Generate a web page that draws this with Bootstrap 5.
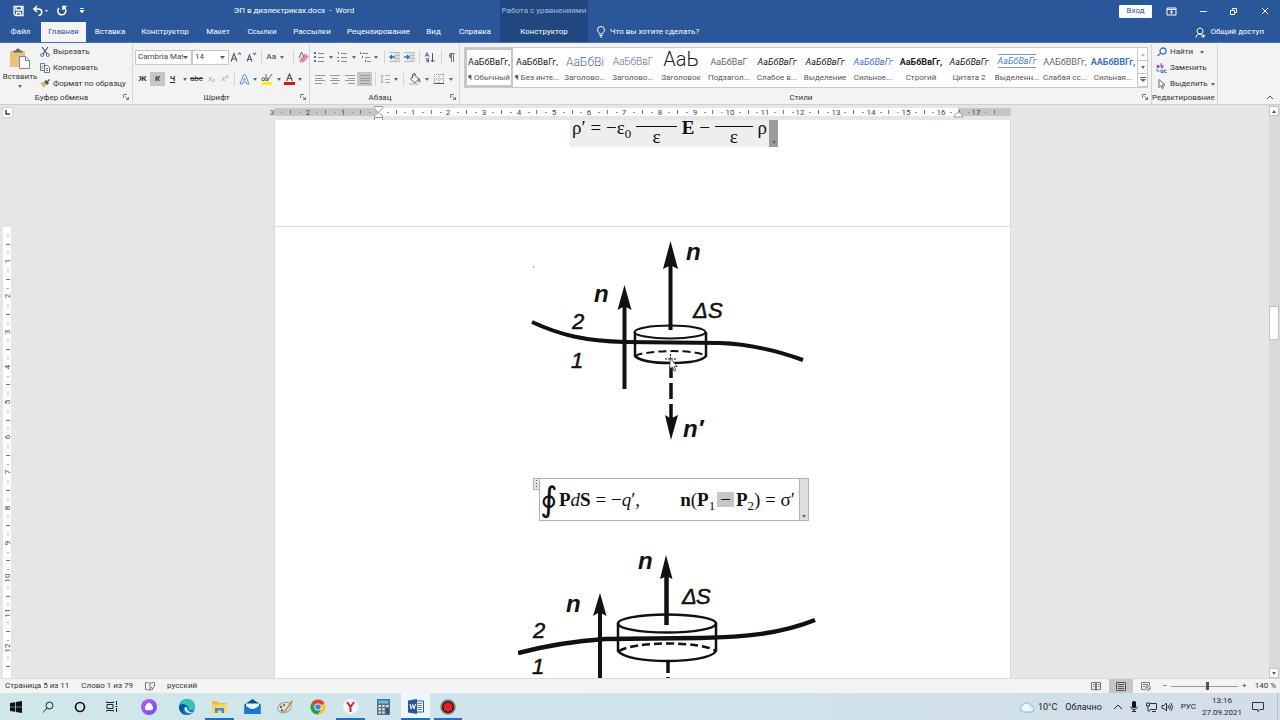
<!DOCTYPE html>
<html lang="ru">
<head>
<meta charset="utf-8">
<meta name="viewport" content="width=device-width, initial-scale=1">
<title>ЭП в диэлектриках.docx - Word</title>
<link href="https://cdn.jsdelivr.net/npm/bootstrap@5.3.0/dist/css/bootstrap.min.css" rel="stylesheet">
<style>
:root{--blue:#2a579a;--ink:#333}
body{font-family:Roboto,"Noto Sans",sans-serif;font-size:8px;line-height:12px;color:var(--ink);background:#e6e6e6}
svg{display:block;flex:none}
a{text-decoration:none;color:inherit}
.b0{border:0;background:none;padding:0;color:inherit;line-height:12px;font-size:inherit;display:flex;align-items:center;justify-content:center;white-space:nowrap}
.head,.ribbon,.status,.bar,.rul{flex-shrink:0}
/* header */
.head{background:var(--blue);color:#fff;border-bottom:1px solid #4a70aa}
.row-title{height:22px}
.row-tabs{height:20px}
.qat{width:88px;padding-left:12px;gap:8px}
.doc-title{width:412px}
.ctx{width:88px;background:#20477f;color:#a9bfdf;white-space:nowrap}
.tabs{display:grid;grid-template-columns:41px 45px 48px 62px 44px 44px 56px 77px 33px 50px 88px}
.tabs a{display:flex;align-items:center;justify-content:center;color:#fff}
.tabs a.on{background:#f3f3f3;color:var(--blue)}
.tabs a.ctx{background:#20477f}
.login{width:33px;height:13px;background:#fff;color:var(--blue);border-radius:1px}
.win{width:31px;height:22px}
/* ribbon */
.ribbon{height:62px;background:#f3f3f3;border-bottom:1px solid #d0d0d0}
.grp{border-right:1px solid #d4d4d4;margin-top:1px}
.grp .cap{height:12px;padding-right:3px}
.g-clip{width:133px}.g-font{width:177px}.g-par{width:150px}.g-sty{width:692px}.g-edit{width:66px}
.paste{width:40px;flex-direction:column;gap:2px;justify-content:flex-start;padding-top:4px}
.stack .b0{height:16px;gap:3px;justify-content:flex-start}
.tools{height:18px;padding-left:2px}
.tools-top{height:26px}
.combo{height:15px;border:1px solid #c6c6c6;border-radius:0;background:#fff url("data:image/svg+xml,%3Csvg xmlns='http://www.w3.org/2000/svg' width='5' height='3'%3E%3Cpath d='M0 0h5L2.500 3z' fill='%23555'/%3E%3C/svg%3E") no-repeat right 3px center;appearance:none;padding:0 8px 0 2px;line-height:12px;color:#444;overflow:hidden}
.c-face{width:57px}.c-size{width:37px}
.w9{width:9px}.w12{width:12px}.w15{width:15px}.w20{width:20px}
.tools .b0{height:14px}
.tools .b0.on{background:#c6c6c6}
.vr1{width:1px;height:14px;background:#d4d4d4;margin:0 3px}
.off{color:#a8a8a8}
.car{width:0;height:0;border:2px solid transparent;border-top:3px solid #666;border-bottom:0}
.gallery{margin:3px 3px 0 4px;height:41px;border:1px solid #c9c9c9;background:#fff}
.sty{width:48px;flex-direction:column;height:39px;justify-content:flex-start}
.sty.on{box-shadow:inset 0 0 0 2px #c6c6c6}
.sty b,.sty i,.sty span{height:24px;line-height:28px;font-size:9px;color:#222;font-weight:400}
.sty em{font-style:normal;line-height:12px;color:#555}
.sty .h1x{font-size:12px;color:#4f6d94;font-weight:300}
.sty .h2x{font-size:10px;color:#4f6d94;font-weight:300}
.sty .tx{font-size:20px;line-height:22px;font-weight:300}
.sty .bl{color:#3f73c0}
.sty .gy{color:#666}
.sty .bd{font-weight:700}
.sty .ln{height:14px;line-height:12px;margin:6px 0 4px;border:solid #7a9bc8;border-width:1px 0;color:#4f7fc0}
.gscroll{width:10px}
.gscroll .b0{height:13px;width:10px;border-left:1px solid #c9c9c9;border-bottom:1px solid #c9c9c9}
/* workspace */
.ws{min-height:0}
.rul{height:15px}
.corner{width:16px;padding:2px}
.tab-stop{width:11px;height:11px;background:#fff;border:1px solid #d2d2d2}
.sheet-w{width:737px}
.hr-strip{height:8px;margin-top:3px;background:linear-gradient(90deg,#c6c6c6 104px,#fff 104px,#fff 684px,#c6c6c6 684px)}
.vr-col{width:16px;padding:107px 5px 0 3px}
.vr-strip{width:8px;background:#fff;min-height:0;overflow:hidden}
.scr{width:11px;background:#dadada;padding:1px 1px 0 0}
.scr .b0,.scr .thumb{width:10px;height:10px;background:#fff;border:1px solid #c0c0c0}
.scr .thumb{height:34px}
.sp-a{flex:191 0 0}.sp-b{flex:329 0 0}
.sheet{background:#fff;padding:0 53px 0 104px;border:solid #d9d9d9;border-width:0 1px}
.p-one{height:106px}
.p-two{border-top:1px solid #dcdcdc}
.eq{font-family:"Liberation Serif",serif;font-size:19px;line-height:24px;color:#111;margin-left:12px}
.eq sub{font-size:13px;bottom:-4px}
.eq-a{width:208px;height:27px;background:#eee;overflow:hidden}
.eq-a .in{height:27px;padding:0 2px;margin-top:-2px}
.frac{border-top:1px solid #111;text-align:center;height:20px;line-height:20px;margin-top:8px}
.f-a{width:41px}.f-b{width:38px}
.tail{background:#9a9a9a;width:9px;padding-bottom:3px}
.eq-b{width:270px;height:43px;border:1px solid #b3b3b3;margin-top:28px}
.eq-b .tail{background:#dedede;border-left:1px solid #b3b3b3;padding-bottom:2px}
.oint{font-family:"DejaVu Serif",serif;font-size:34px;line-height:40px;width:19px}
.handle{position:absolute;left:-7px;top:-1px;width:7px;height:12px;background:#e4e4e4;border:1px solid #b3b3b3}
.sel{background:#c6c6c6;padding:0 3px;line-height:15px;height:15px;margin:0 2px}
.d-one{margin-top:8px}.d-two{margin-top:29px}
.fig text{font-family:"Liberation Sans Narrow","Liberation Sans",sans-serif;font-style:italic;font-size:22px;fill:#111;stroke:#111;stroke-width:.5}
.fig .bn{font-family:"Liberation Sans",sans-serif;font-weight:700;font-size:24px;stroke:none}
.rule text{font-size:8px;fill:#444;text-anchor:middle}
/* status */
.status{height:15px;background:#f3f3f3;border-top:1px solid #dadada;padding-left:5px}
.st-left{gap:12px}
.view-on{width:24px;height:14px;background:#c6c6c6}
.zoomer{width:67px;height:10px;appearance:none;background:linear-gradient(#999,#999) center/100% 1px no-repeat}
.zoomer::-webkit-slider-thumb{appearance:none;width:3px;height:8px;background:#555;border:0;border-radius:0}
.bar{height:27px;background:linear-gradient(90deg,#cfe7eb,#cfe4eb 45%,#d3dde9)}
.apps{display:grid;grid-template-columns:repeat(4,32px) 42px 33px 33px 33px 32px 33px 33px 32px 33px 32px}
.apps .b0{height:27px;border-bottom:2px solid transparent;margin:0 2px;padding-top:2px}
.apps .run{border-bottom-color:#1a73c8}
.apps .act{background:#eef7fb}
.tray{color:#222}
.wthr{font-size:9px}
.clock{width:44px;text-align:center}
.desk{border-left:1px solid #b5bfca;width:3px;margin-left:13px}
</style>
</head>
<body class="vh-100 d-flex flex-column overflow-hidden">
<header class="head">
  <div class="row-title d-flex">
    <div class="qat d-flex align-items-center">
      <button class="b0" aria-label="Сохранить"><svg width="12" height="12" viewBox="0 0 12 12" fill="none" stroke="#fff" stroke-width="1.300"><path d="M2 1.500h9v9H3.500L2 9zM4 1.500v3.500h5.500V1.500M4.500 10.500v-3h4v3"/></svg></button>
      <button class="b0" aria-label="Отменить"><svg width="16" height="12" viewBox="0 0 16 12" fill="none" stroke="#fff" stroke-width="1.600"><path d="M5 1L2 4l3 3M2 4h4.500a3 3 0 0 1 0 6.500"/><path d="M13 5h3l-1.500 2z" fill="#fff" stroke="none"/></svg></button>
      <button class="b0" aria-label="Повторить"><svg width="12" height="12" viewBox="0 0 12 12" fill="none" stroke="#fff" stroke-width="1.500"><path d="M3 3a4 4 0 1 0 5-.5M10.500 1.500H7V5"/></svg></button>
      <button class="b0" aria-label="Настройка панели"><svg width="12" height="8" viewBox="0 0 12 8"><path d="M4 1.500h4M4 3.500h4L6 6z" fill="#fff" stroke="#fff" stroke-width=".8"/></svg></button>
    </div>
    <div class="doc-title text-center align-self-center">ЭП в диэлектриках.docx&nbsp; -&nbsp; Word</div>
    <div class="ctx d-flex align-items-center justify-content-center">Работа с уравнениями</div>
    <div class="ms-auto d-flex align-items-center">
      <button class="b0 login me-1">Вход</button>
      <button class="b0 win" aria-label="Параметры ленты"><svg width="11" height="9" viewBox="0 0 11 9" fill="none" stroke="#fff"><path d="M1 1h9v7H1zM1 2.500h9M5.500 7V4M4 5.300L5.500 4 7 5.300"/></svg></button>
      <button class="b0 win" aria-label="Свернуть"><svg width="8" height="8" stroke="#fff"><path d="M1 4.500h7"/></svg></button>
      <button class="b0 win" aria-label="Восстановить"><svg width="9" height="9" fill="none" stroke="#fff"><path d="M1.500 3.500h4v4h-4zM3.500 3V1.500h4v4H6"/></svg></button>
      <button class="b0 win" aria-label="Закрыть"><svg width="8" height="8" stroke="#fff"><path d="M1 1l6 6M7 1L1 7"/></svg></button>
    </div>
  </div>
  <div class="row-tabs d-flex">
    <nav class="tabs" aria-label="Вкладки ленты">
      <a href="#">Файл</a><a href="#" class="on">Главная</a><a href="#">Вставка</a><a href="#">Конструктор</a><a href="#">Макет</a><a href="#">Ссылки</a><a href="#">Рассылки</a><a href="#">Рецензирование</a><a href="#">Вид</a><a href="#">Справка</a><a href="#" class="ctx">Конструктор</a>
    </nav>
    <button class="b0 ps-2 gap-1"><svg width="10" height="12" viewBox="0 0 10 12" fill="none" stroke="#fff"><path d="M3.500 8C3.500 6.500 1.500 6 1.500 4a3.500 3.500 0 0 1 7 0c0 2-2 2.500-2 4zM3.500 9.500h3M4 11h2"/></svg>Что вы хотите сделать?</button>
    <button class="b0 ms-auto me-3 gap-1"><svg width="11" height="11" viewBox="0 0 11 11" fill="none" stroke="#fff"><circle cx="5" cy="4" r="3"/><path d="M1 10.500C1 8 3 7 5 7c1 0 1.500.2 2 .5M6 9h4.500M8.200 7v4"/></svg>Общий доступ</button>
  </div>
</header>

<section class="ribbon d-flex" aria-label="Главная">
  <div class="grp g-clip d-flex flex-column">
    <div class="d-flex">
      <button class="b0 paste"><svg width="20" height="21" viewBox="0 0 20 21"><path d="M0 3h15v16H0z" fill="#e9c27a"/><path d="M3.500 4.500V2.500h2.500a2 2 0 0 1 4 0h2.500v2z" fill="#666"/><path d="M9.500 8.500h6l4 4v8h-10z" fill="#fff" stroke="#888"/><path d="M15.500 8.500v4h4" fill="none" stroke="#888"/></svg>Вставить<span class="car"></span></button>
      <div class="stack">
        <button class="b0"><svg width="10" height="10" viewBox="0 0 10 10" fill="none"><path d="M2 0l5 7M8 0L3 7" stroke="#555" stroke-width="1.200"/><circle cx="2.200" cy="8" r="1.500" stroke="#3b78b5"/><circle cx="7.800" cy="8" r="1.500" stroke="#3b78b5"/></svg>Вырезать</button>
        <button class="b0"><svg width="10" height="10" viewBox="0 0 10 10" fill="#fff" stroke="#6a7a8a"><path d="M.5.500h4v7h-4zM4.500 2.500h3l2 2v5h-5z"/><path d="M6 5.500h2M6 7.500h2M1.500 3h2M1.500 5h2" stroke="#3b78b5"/></svg>Копировать</button>
        <button class="b0"><svg width="10" height="10" viewBox="0 0 10 10"><path d="M0 4l4-1 2 3-2 3z" fill="#e5b36a"/><path d="M4 3l2-2 3 3-2 2zM7 2l2-2 1 1-2 2z" fill="#555"/></svg>Формат по образцу</button>
      </div>
    </div>
    <div class="cap d-flex mt-auto"><span class="flex-fill text-center">Буфер обмена</span><svg width="6" height="8" viewBox="0 0 6 8" fill="none" stroke="#777"><path d="M.5 6V2.500H4M2.500 4.500l3 3M5.500 5v2.500H3"/></svg></div>
  </div>

  <div class="grp g-font d-flex flex-column">
    <div class="tools tools-top d-flex align-items-center">
      <select class="combo c-face" aria-label="Шрифт"><option>Cambria Math</option></select>
      <select class="combo c-size" aria-label="Размер шрифта"><option>14</option></select>
      <button class="b0 w15" aria-label="Увеличить"><svg width="12" height="12" viewBox="0 0 12 12" fill="none" stroke="#555" stroke-width="1.100"><path d="M1 10.500l3-8 3 8M2 8h4"/><path d="M8 3.500L9.500 2 11 3.500" stroke="#3b78b5"/></svg></button>
      <button class="b0 w15" aria-label="Уменьшить"><svg width="12" height="12" viewBox="0 0 12 12" fill="none" stroke="#555" stroke-width="1.100"><path d="M2 10.500l2.500-6.500L7 10.500M3 8.500h3"/><path d="M8 2l1.500 1.500L11 2" stroke="#3b78b5"/></svg></button>
      <span class="vr1"></span>
      <button class="b0 gap-1 w20">Aa<span class="car"></span></button>
      <span class="vr1 ms-2"></span>
      <button class="b0 w12" aria-label="Очистить формат"><svg width="11" height="12" viewBox="0 0 11 12"><path d="M1 9.500l6-7 4 3-5.500 6H3z" fill="#e58aa0"/><path d="M1 7l2.500-6L6 6" fill="none" stroke="#666"/></svg></button>
    </div>
    <div class="tools d-flex align-items-center">
      <button class="b0 w15 fw-bold">Ж</button><button class="b0 w15 on fw-bold fst-italic">К</button><button class="b0 w15 fw-bold text-decoration-underline">Ч</button><button class="b0 w9" aria-label="Вид подчёркивания"><span class="car"></span></button><button class="b0 w15 text-decoration-line-through">abc</button><button class="b0 w15 off">x₂</button><button class="b0 w12 off">x²</button>
      <span class="vr1"></span>
      <button class="b0 w12" aria-label="Эффекты"><svg width="11" height="11" viewBox="0 0 11 11" fill="#fff" stroke="#5b93cc"><path d="M1 10L4.500 1h2L10 10H7.800L7 8H4l-.8 2zM4.700 6.200h1.600L5.500 4z"/></svg></button><button class="b0 w9" aria-label="Ещё эффекты"><span class="car"></span></button>
      <button class="b0 w15" aria-label="Цвет выделения"><svg width="12" height="12" viewBox="0 0 12 12"><path d="M1 9h10v3H1z" fill="#ffee00"/><path d="M1 7.500V5h2.500v2.500zM5 1v6.500h2V5H5M6 8l5-7" fill="none" stroke="#666"/></svg></button><button class="b0 w9" aria-label="Ещё выделение"><span class="car"></span></button>
      <button class="b0 w12" aria-label="Цвет текста"><svg width="11" height="12" viewBox="0 0 11 12"><path d="M0 9h11v3H0z" fill="#e01010"/><path d="M2.500 8l3-7 3 7M3.500 5.500h4" fill="none" stroke="#555" stroke-width="1.200"/></svg></button><button class="b0 w9" aria-label="Ещё цвет"><span class="car"></span></button>
    </div>
    <div class="cap d-flex mt-auto"><span class="flex-fill text-center">Шрифт</span><svg width="6" height="8" viewBox="0 0 6 8" fill="none" stroke="#777"><path d="M.5 6V2.500H4M2.500 4.500l3 3M5.500 5v2.500H3"/></svg></div>
  </div>

  <div class="grp g-par d-flex flex-column">
    <div class="tools tools-top d-flex align-items-center">
      <button class="b0 w15" aria-label="Маркеры"><svg width="10" height="10" fill="none"><path d="M0 1h2M0 5h2M0 9h2" stroke="#3b78b5" stroke-width="2"/><path d="M4 1.500h6M4 5.500h6M4 9.500h6" stroke="#888"/></svg></button><button class="b0 w9" aria-label="Ещё маркеры"><span class="car"></span></button>
      <button class="b0 w15" aria-label="Нумерация"><svg width="10" height="10" fill="none"><path d="M1.500 0v2M0 5.500h2M1.500 8v2" stroke="#3b78b5"/><path d="M4 1.500h6M4 5.500h6M4 9.500h6" stroke="#888"/></svg></button><button class="b0 w9" aria-label="Ещё нумерация"><span class="car"></span></button>
      <button class="b0 w15" aria-label="Многоуровневый список"><svg width="12" height="10" fill="none"><path d="M1.500 0v2M3.500 4v2M6.500 8v2" stroke="#3b78b5"/><path d="M3 1.500h6M6 5.500h5M8 9.500h4" stroke="#888"/></svg></button><button class="b0 w9" aria-label="Ещё списки"><span class="car"></span></button>
      <span class="vr1"></span>
      <button class="b0 w15" aria-label="Уменьшить отступ"><svg width="11" height="10" fill="none"><path d="M5 0h6v10H5z" fill="#dcdcdc"/><path d="M0 .5h11M6 3.500h5M6 6.500h5M0 9.500h11" stroke="#bbb"/><path d="M6 5H1M3 3L1 5l2 2" stroke="#2f6fb5" stroke-width="1.500"/></svg></button>
      <button class="b0 w15" aria-label="Увеличить отступ"><svg width="11" height="10" fill="none"><path d="M5 0h6v10H5z" fill="#dcdcdc"/><path d="M0 .5h11M6 3.500h5M6 6.500h5M0 9.500h11" stroke="#bbb"/><path d="M0 5h5M3 3l2 2-2 2" stroke="#2f6fb5" stroke-width="1.500"/></svg></button>
      <span class="vr1"></span>
      <button class="b0 w15" aria-label="Сортировка"><svg width="10" height="11" fill="none"><path d="M0 5l2-4.500L4 5M1 3.500h2" stroke="#3b78b5"/><path d="M3.500 10.500v-4h-2v2h2l-2 2" stroke="#8a4fa0"/><path d="M7.500 1v9M5.500 8l2 2 2-2" stroke="#555"/></svg></button>
      <span class="vr1"></span>
      <button class="b0 w15" aria-label="Знаки абзаца"><svg width="7" height="9" fill="none" stroke="#777"><path d="M3.500 9V.5M5.500 9V.5M2 .5h5"/><path d="M3.500 0v5a2.500 2.500 0 0 1 0-5z" fill="#777" stroke="none"/></svg></button>
    </div>
    <div class="tools d-flex align-items-center">
      <button class="b0 w15" aria-label="По левому краю"><svg width="10" height="9" stroke="#999"><path d="M0 .5h10M0 3.500h7M0 5.500h10M0 8.500h7"/></svg></button><button class="b0 w15" aria-label="По центру"><svg width="10" height="9" stroke="#999"><path d="M0 .5h10M2 3.500h6M0 5.500h10M2 8.500h6"/></svg></button><button class="b0 w15" aria-label="По правому краю"><svg width="10" height="9" stroke="#999"><path d="M0 .5h10M3 3.500h7M0 5.500h10M3 8.500h7"/></svg></button><button class="b0 w15 on" aria-label="По ширине"><svg width="10" height="9" stroke="#999"><path d="M0 .5h10M0 3.500h10M0 5.500h10M0 8.500h10"/></svg></button>
      <span class="vr1"></span>
      <button class="b0 w12" aria-label="Интервал"><svg width="10" height="10" fill="none" stroke="#aaa"><path d="M2 1v8M.5 2.500L2 1l1.500 1.500M.5 7.500L2 9l1.500-1.500M5 1.500h5M5 5.500h5M5 8.500h5"/></svg></button><button class="b0 w9" aria-label="Ещё интервал"><span class="car"></span></button>
      <span class="vr1"></span>
      <button class="b0 w15" aria-label="Заливка"><svg width="12" height="12" viewBox="0 0 12 12" fill="none"><path d="M5 1.500l5 4.500-4 4-4.500-4zM3.500 5V2a1.500 1.500 0 0 1 3 0" stroke="#666"/><path d="M10 5c2 2 1.500 4 .5 4.500S9 7 10 5z" fill="#3b78b5"/><path d="M0 11h9" stroke="#ccc" stroke-width="2"/></svg></button><button class="b0 w9" aria-label="Ещё заливка"><span class="car"></span></button>
      <button class="b0 w15" aria-label="Границы"><svg width="10" height="10" fill="none"><path d="M.5 0v9M9.500 0v9M5 0v9M0 .5h10M0 5h10" stroke="#999" stroke-dasharray="1 1"/><path d="M0 9.500h10" stroke="#555"/></svg></button><button class="b0 w9" aria-label="Ещё границы"><span class="car"></span></button>
    </div>
    <div class="cap d-flex mt-auto"><span class="flex-fill text-center">Абзац</span><svg width="6" height="8" viewBox="0 0 6 8" fill="none" stroke="#777"><path d="M.5 6V2.500H4M2.500 4.500l3 3M5.500 5v2.500H3"/></svg></div>
  </div>

  <div class="grp g-sty d-flex flex-column">
    <div class="gallery d-flex">
      <button class="b0 sty on"><span>АаБбВвГг,</span><em>¶ Обычный</em></button>
      <button class="b0 sty"><span>АаБбВвГг,</span><em>¶ Без инте...</em></button>
      <button class="b0 sty"><span class="h1x">АаБбВі</span><em>Заголово...</em></button>
      <button class="b0 sty"><span class="h2x">АаБбВвГ</span><em>Заголово...</em></button>
      <button class="b0 sty"><span class="tx">АаЬ</span><em>Заголовок</em></button>
      <button class="b0 sty"><span class="gy">АаБбВвГ</span><em>Подзагол...</em></button>
      <button class="b0 sty"><i>АаБбВвГг</i><em>Слабое в...</em></button>
      <button class="b0 sty"><i>АаБбВвГг</i><em>Выделение</em></button>
      <button class="b0 sty"><i class="bl">АаБбВвГг</i><em>Сильное...</em></button>
      <button class="b0 sty"><b class="bd">АаБбВвГг,</b><em>Строгий</em></button>
      <button class="b0 sty"><i>АаБбВвГг</i><em>Цитата 2</em></button>
      <button class="b0 sty"><i class="ln">АаБбВвГг</i><em>Выделенн...</em></button>
      <button class="b0 sty"><span class="gy">ААБбВВГг,</span><em>Слабая сс...</em></button>
      <button class="b0 sty"><b class="bl bd">ААБбВВГг,</b><em>Сильная...</em></button>
      <div class="gscroll ms-auto">
        <button class="b0" aria-label="Вверх"><svg width="4" height="3"><path d="M0 3h4L2 0z" fill="#bbb"/></svg></button>
        <button class="b0" aria-label="Вниз"><span class="car"></span></button>
        <button class="b0" aria-label="Все стили"><svg width="6" height="6"><path d="M0 .5h6" stroke="#666"/><path d="M0 2h6L3 5z" fill="#666"/></svg></button>
      </div>
    </div>
    <div class="cap d-flex mt-auto"><span class="flex-fill text-center">Стили</span><svg width="6" height="8" viewBox="0 0 6 8" fill="none" stroke="#777"><path d="M.5 6V2.500H4M2.500 4.500l3 3M5.500 5v2.500H3"/></svg></div>
  </div>

  <div class="grp g-edit d-flex flex-column">
    <div class="stack ps-1">
      <button class="b0"><svg width="11" height="10" fill="none" stroke="#3b78b5" stroke-width="1.300"><circle cx="7" cy="4" r="3"/><path d="M5 6L1.500 9"/></svg>Найти <span class="car ms-1"></span></button>
      <button class="b0"><svg width="11" height="10" viewBox="0 0 11 10" fill="none"><path d="M1 2.500h2v2H1v-1h2M5 0v4.500h2v-2H5" stroke="#8a4fa0"/><path d="M5 7h2v2.500H5zM10.500 7h-2v2.500h2M1 6v2h2.500" stroke="#3b78b5"/></svg>Заменить</button>
      <button class="b0"><svg width="11" height="10" fill="#fff" stroke="#666"><path d="M3 .5v8l2-2 1.200 3 1.300-.6L6.300 6H9z"/></svg>Выделить<span class="car"></span></button>
    </div>
    <div class="cap text-center mt-auto">Редактирование</div>
  </div>
  <button class="b0 ms-auto me-1 mb-1 align-self-end" aria-label="Свернуть ленту"><svg width="12" height="6" fill="none" stroke="#555"><path d="M3 5l3-3 3 3"/></svg></button>
</section>

<main class="ws flex-fill d-flex">
  <div class="ws flex-fill d-flex flex-column">
    <div class="rul d-flex">
      <div class="corner"><div class="tab-stop"><svg width="9" height="9" fill="none" stroke="#444" stroke-width="1.500"><path d="M3 2v4h4"/></svg></div></div>
      <div class="flex-fill d-flex justify-content-center">
        <div class="sheet-w hr-strip"><svg class="rule overflow-visible" id="hrule" width="737" height="12"></svg></div>
      </div>
    </div>
    <div class="ws flex-fill d-flex overflow-hidden">
      <div class="vr-col d-flex flex-column"><div class="vr-strip flex-fill"><svg class="rule" id="vrule" width="8" height="100%"></svg></div></div>
      <div class="flex-fill d-flex justify-content-center">
        <article class="sheet-w">
          <div class="sheet p-one d-flex justify-content-center align-items-start">
            <div class="eq eq-a d-flex">
              <div class="in flex-fill d-flex align-items-start justify-content-between lh-1">
                <span>ρ′</span><span>=</span><span>−ε<sub>0</sub></span><span class="frac f-a">ε</span><b>E</b><span>−</span><span class="frac f-b">ε</span><span>ρ</span>
              </div>
              <div class="tail d-flex align-items-end justify-content-center"><span class="car"></span></div>
            </div>
          </div>
          <div class="sheet p-two d-flex flex-column align-items-center">
            <svg class="fig d-one" width="300" height="215" viewBox="518 235 300 215" fill="none" stroke="#111" role="img" aria-label="Граница двух диэлектриков, цилиндр и нормали">
              <path d="M532 322C560 335 585 341 625 342L720 343C750 344 775 350 803 360" stroke-width="4"/>
              <path d="M624.500 389V300" stroke-width="4"/><path d="M624.500 285L631.500 310L626 307H623L617.500 310Z" fill="#111" stroke="none"/>
              <path d="M670.500 330V262" stroke-width="4"/><path d="M670.500 241L678 269L672 266H669L663 269Z" fill="#111" stroke="none"/>
              <ellipse cx="670" cy="332" rx="35.500" ry="6.500" stroke-width="2"/>
              <path d="M635 332V356C640 361 655 363 671 363S702 361 706 356V332" stroke-width="2.500"/>
              <path d="M635 356C645 350 697 349 706 356" stroke-width="2" stroke-dasharray="8 4"/>
              <path d="M671 366V378M671 383V399M671 404V420" stroke-width="3.500"/><path d="M671 440L665 415L670 418H672L678 415Z" fill="#111" stroke="none"/>
              <circle cx="533.500" cy="267" r=".8" fill="#888" stroke="none"/>
              <text class="bn" x="686" y="260">n</text><text class="bn" x="594" y="302">n</text>
              <text x="693" y="318">Δ</text><text x="708" y="318">S</text>
              <text x="572" y="329">2</text><text x="571" y="368">1</text><text class="bn" x="683" y="437">n′</text>
              <path d="M665 359H676M670.500 354V359" stroke-width="1" stroke-dasharray="2 1"/>
              <path d="M670 358v11l2.500-2 1.500 4 1.800-.8-1.600-3.700h3.200z" fill="#fff" stroke="#333" stroke-width=".8"/>
            </svg>
            <div class="eq eq-b d-flex position-relative">
              <span class="handle d-flex align-items-center justify-content-center"><svg width="3" height="8"><path d="M1.500 0v8" stroke="#555" stroke-dasharray="1 2"/></svg></span>
              <span class="oint">∮</span>
              <div class="flex-fill d-flex align-items-center justify-content-between pe-1"><span><b>P</b><i>d</i><b>S</b> = −<i>q</i>′,</span><span class="d-flex align-items-center"><span><b>n</b>(<b>P</b><sub>1</sub></span><span class="sel">−</span><span><b>P</b><sub>2</sub>) = σ′</span></span></div>
              <div class="tail d-flex align-items-end justify-content-center"><span class="car"></span></div>
            </div>
            <svg class="fig d-two" width="300" height="215" viewBox="518 550 300 215" fill="none" stroke="#111" role="img" aria-label="Граница двух диэлектриков, второе положение">
              <path d="M518 653C545 646 575 641 605 639L700 638C745 637 780 634 815 620" stroke-width="4.500"/>
              <path d="M600 700V610" stroke-width="4"/><path d="M600 593L606.500 616L601 613H598L593 616Z" fill="#111" stroke="none"/>
              <path d="M666.500 625V572" stroke-width="4.500"/><path d="M666 555L672.500 579L668 577H665L660 579Z" fill="#111" stroke="none"/>
              <ellipse cx="667" cy="623.500" rx="49" ry="9" stroke-width="2.500"/>
              <path d="M618 623V651C623 658 645 661 667 661S712 658 716 651V623" stroke-width="2.500"/>
              <path d="M619 651C635 641 702 641 716 651" stroke-width="2.500" stroke-dasharray="8 4"/>
              <path d="M668 662V673M668 677V693" stroke-width="3.500"/>
              <text class="bn" x="638" y="569">n</text><text class="bn" x="566" y="612">n</text>
              <text x="682" y="604">Δ</text><text x="696" y="604">S</text><text x="533" y="638">2</text><text x="532" y="674">1</text>
            </svg>
          </div>
        </article>
      </div>
    </div>
  </div>
  <div class="scr d-flex flex-column">
    <button class="b0" aria-label="Прокрутить вверх"><svg width="4" height="3"><path d="M0 3h4L2 0z" fill="#555"/></svg></button>
    <div class="sp-a"></div><div class="thumb"></div><div class="sp-b"></div>
    <button class="b0" aria-label="Прокрутить вниз"><span class="car"></span></button>
  </div>
</main>

<div class="status d-flex align-items-center">
  <div class="st-left d-flex align-items-center">
    <span>Страница 5 из 11</span><span>Слово 1 из 79</span>
    <svg width="10" height="9" fill="none" stroke="#777"><path d="M5 8V1.500C4 .5 2 .5.500.500v7C2 7.500 4 7.500 5 8.500 6 7.500 7 7.500 8 7.500M5 1.500C6 .5 8 .5 9.500.500V4M6 5l1.500 2L10 3"/></svg>
    <span>русский</span>
  </div>
  <div class="ms-auto d-flex align-items-center">
    <button class="b0 me-2" aria-label="Режим чтения"><svg width="10" height="9" fill="none" stroke="#777"><path d="M.5.500h4v7h-4zM5.500.500h4v7h-4zM2 2.500h1.500M2 4.500h1.500M7 2.500h1.500M7 4.500h1.500M5 0v9"/></svg></button>
    <button class="b0 view-on" aria-label="Разметка страницы"><svg width="10" height="9" fill="none" stroke="#555"><path d="M.5.500h9v8h-9zM2 2.500h6M2 4.500h6M2 6.500h6"/></svg></button>
    <button class="b0 mx-2" aria-label="Веб-документ"><svg width="10" height="9" fill="none" stroke="#777"><path d="M4 7.500H.5v-7h8V3M2 2.500h5M2 4.500h2"/><circle cx="7" cy="6" r="2.300"/><path d="M5 4.500l4 3"/></svg></button>
    <button class="b0 ms-1 me-1">−</button><input class="zoomer m-0" type="range" min="0" max="100" value="55" aria-label="Масштаб"><button class="b0 mx-1">+</button>
    <span class="ms-1 me-1">140 %</span>
  </div>
</div>

<footer class="bar d-flex">
  <div class="apps">
    <button class="b0" aria-label="Пуск"><svg width="12" height="12" viewBox="0 0 12 12" fill="#111"><path d="M0 2l5-.8v4.500H0zM5.700 1L12 0v5.700H5.700zM0 6.300h5v4.500L0 10zM5.700 6.300H12V12l-6.300-1z"/></svg></button>
    <button class="b0" aria-label="Поиск"><svg width="12" height="12" fill="none" stroke="#222"><circle cx="7.500" cy="4.500" r="3.500"/><path d="M5 7L1 11.500"/></svg></button>
    <button class="b0" aria-label="Кортана"><svg width="12" height="12"><circle cx="6" cy="6" r="4.500" fill="none" stroke="#111" stroke-width="1.700"/></svg></button>
    <button class="b0" aria-label="Представление задач"><svg width="12" height="11" fill="none" stroke="#222"><path d="M1 3.500h6v4H1zM.500.500v1h7v-1M.500 10.500v-1h7v1M10.500 0v4M10.500 7v4M9.500 5.500h2"/></svg></button>
    <button class="b0" aria-label="Алиса"><svg width="16" height="16"><defs><linearGradient id="al" x1="0" y1="0" x2="1" y2="1"><stop stop-color="#c25cf0"/><stop offset="1" stop-color="#6a4cf0"/></linearGradient></defs><circle cx="8" cy="8" r="8" fill="url(#al)"/><path d="M8 3.500c2 0 4.500 4.500 4 6.200-.5 2-7.500 2-8 0C3.500 8 6 3.500 8 3.500z" fill="#fff"/></svg></button>
    <button class="b0" aria-label="Edge"><svg width="16" height="16" viewBox="0 0 16 16"><circle cx="8" cy="8" r="8" fill="#1572c4"/><path d="M.3 6A8 8 0 0 1 16 8c0 2.500-2 3.500-4 3.300-2 0-2.500-1-2-1.800C10.500 6 3 3.500.300 6z" fill="#38c4b0"/><path d="M5.500 9c-.5 3 2.500 5.500 5.500 5.200l3.500-1.500C11 14 7.500 11.500 8 8c-1 0-2 .2-2.500 1z" fill="#cfe7eb"/><path d="M0 8c.5-3 6-4.500 8 0-2-1-4 .5-4 3.500 0 2 1 3.500 2.500 4.300C3 15.500 0 12 0 8z" fill="#0d55a0"/></svg></button>
    <button class="b0 run" aria-label="Проводник"><svg width="15" height="14"><path d="M0 1h5l1.500 2H15v10H0z" fill="#f0b93c"/><path d="M0 4.500h15V13H0z" fill="#fbd867"/><path d="M3 13V8h9v5h-2.500v-2.500h-4V13z" fill="#3f8bd0"/></svg></button>
    <button class="b0" aria-label="Почта"><svg width="17" height="15"><path d="M.500 5.500L8.500 0l8 5.500V15H.500z" fill="#0b4f92"/><path d="M2 4.500h13V10H2z" fill="#e8f4fb"/><path d="M.500 6l8 5 8-5v9H.500z" fill="#1a78cc"/></svg></button>
    <button class="b0" aria-label="Paint"><svg width="16" height="15"><ellipse cx="7.500" cy="8.500" rx="7" ry="5" fill="#e4e2da" stroke="#8fa5b5" transform="rotate(-20 7.500 8.500)"/><circle cx="4" cy="8" r="1.200" fill="#d33"/><circle cx="7" cy="6" r="1.200" fill="#3a3"/><circle cx="5" cy="11.500" r="1.200" fill="#36c"/><path d="M15 1L7 12l-1 2 2-1 8-10z" fill="#c98a3a"/></svg></button>
    <button class="b0" aria-label="Chrome"><svg width="16" height="16" viewBox="0 0 16 16"><circle cx="8" cy="8" r="7.500" fill="#f7c52b"/><path d="M8 8L1.500 4.200A7.500 7.500 0 0 1 14.500 4.200z" fill="#dd4437"/><path d="M8 8L1.500 4.200A7.500 7.500 0 0 0 8 15.500l3-5z" fill="#2a9d4f"/><circle cx="8" cy="8" r="3.600" fill="#fff"/><circle cx="8" cy="8" r="2.800" fill="#3f80e8"/></svg></button>
    <button class="b0 run" aria-label="Яндекс"><svg width="15" height="15"><circle cx="7.500" cy="7.500" r="7.500" fill="#f7f7f7"/><path d="M4 3l3.500 5L11 3M7.500 8v5" fill="none" stroke="#d22" stroke-width="2"/></svg></button>
    <button class="b0" aria-label="Калькулятор"><svg width="13" height="16"><path d="M0 0h13v16H0z" fill="#5d6f7c"/><path d="M1.500 1.500h10v3h-10z" fill="#59c3ec"/><path d="M1.500 6h2.500v2H1.500zM5.200 6h2.500v2H5.200zM9 6h2.500v2H9zM1.500 9.200h2.500v2H1.500zM5.200 9.200h2.500v2H5.200zM1.500 12.400h2.500v2H1.500zM5.200 12.400h2.500v2H5.200z" fill="#dce5ea"/><path d="M9 9.200h2.500v5.200H9z" fill="#1b4f93"/></svg></button>
    <button class="b0 run act" aria-label="Word"><svg width="16" height="15" viewBox="0 0 16 15"><path d="M8 2h7.500v11H8z" fill="#fff" stroke="#2a579a"/><path d="M9.500 4.500h4.500M9.500 6.500h4.500M9.500 8.500h4.500M9.500 10.500h4.500" stroke="#5a80b8"/><path d="M0 1.500L9 0v15l-9-1.500z" fill="#2a579a"/><path d="M2 5l1.200 5L4.700 5.500 6.200 10 7.400 5" fill="none" stroke="#fff"/></svg></button>
    <button class="b0 run" aria-label="Запись экрана"><svg width="16" height="16"><circle cx="8" cy="8" r="7.500" fill="#111" stroke="#9aa"/><circle cx="8" cy="8" r="6.500" fill="none" stroke="#eee" stroke-width=".6"/><circle cx="8" cy="8" r="4.800" fill="#e82020"/></svg></button>
  </div>
  <div class="tray ms-auto d-flex align-items-center">
    <svg width="15" height="12"><path d="M4 11a3.500 3.500 0 0 1-.5-6.500A4.500 4.500 0 0 1 12 5a3 3 0 0 1 0 6z" fill="#eaf6ff" stroke="#7ab8e6"/></svg>
    <span class="wthr ms-1">10°C</span><span class="wthr ms-2">Облачно</span>
    <svg class="ms-2" width="16" height="8" fill="none" stroke="#222"><path d="M4 6l4-4 4 4"/></svg>
    <svg class="ms-1" width="8" height="11"><rect x="2" y="0" width="4" height="7" rx="1.500" fill="#111"/><path d="M.8 5.500c0 4 6.400 4 6.400 0M4 8.500V11M2 10.500h4" fill="none" stroke="#222"/></svg>
    <svg class="ms-2" width="11" height="10" fill="none" stroke="#333"><path d="M4 1.500h6.500v6H4M6 9.500h4M.500 1h3v3h-3zM2 4v5h2"/></svg>
    <svg class="ms-1" width="12" height="10" fill="none" stroke="#333"><path d="M1 3.500h2L5.500 1v8L3 6.500H1zM7 3.500q1 1.500 0 3M8.500 2.500q1.800 2.500 0 5M10 1q3 4 0 8"/></svg>
    <span class="ms-2">РУС</span>
    <div class="clock ms-1"><div>13:16</div><div>27.09.2021</div></div>
    <svg class="ms-2" width="12" height="12" fill="none" stroke="#333"><path d="M.5 1.500h11v7H8L6 10.500V8.500H.5z"/></svg>
    <span class="desk align-self-stretch"></span>
  </div>
</footer>

<script src="https://cdn.jsdelivr.net/npm/bootstrap@5.3.0/dist/js/bootstrap.bundle.min.js"></script>
<script>
// Rulers: one centimetre is 35.2 px at this zoom level; quarter marks between numbers.
const CM = 35.2;
function marks(from, to, draw) {
  let out = '';
  for (let q = Math.ceil(from * 4); q <= to * 4; q++) if (q !== 0) out += draw(q * CM / 4, q % 4 === 0 ? Math.abs(q / 4) : null, q % 2 === 0);
  return out;
}
document.getElementById('hrule').innerHTML = marks(-3, 17.5, (p, n, half) => {
  const x = Math.round(104 + p);
  if (n !== null) return `<text x="${x}" y="7">${n}</text>`;
  return half ? `<path d="M${x}.5 2v4" stroke="#777"/>` : `<path d="M${x} 4.500h2" stroke="#999"/>`;
}) + '<path d="M100.500 -1.500h8v2l-4 4-4-4zM100.500 9.500v-2l4-3 4 3v5h-8zM100.500 9.500h8M680.500 9v-2l4-3 4 3v2z" fill="#fff" stroke="#999"/>';
const vrule = document.getElementById('vrule');
function drawVertical() {
  const length = (vrule.parentNode.clientHeight - 6) / CM;
  vrule.innerHTML = marks(0, length, (p, n, half) => {
    const y = Math.round(p - 1);
    if (n !== null) return `<text transform="translate(7 ${y}) rotate(-90)">${n}</text>`;
    return half ? `<path d="M3 ${y}.5h4" stroke="#777"/>` : `<path d="M4 ${y}.5h2" stroke="#aaa"/>`;
  });
}
drawVertical();
addEventListener('resize', drawVertical);
</script>
</body>
</html>
